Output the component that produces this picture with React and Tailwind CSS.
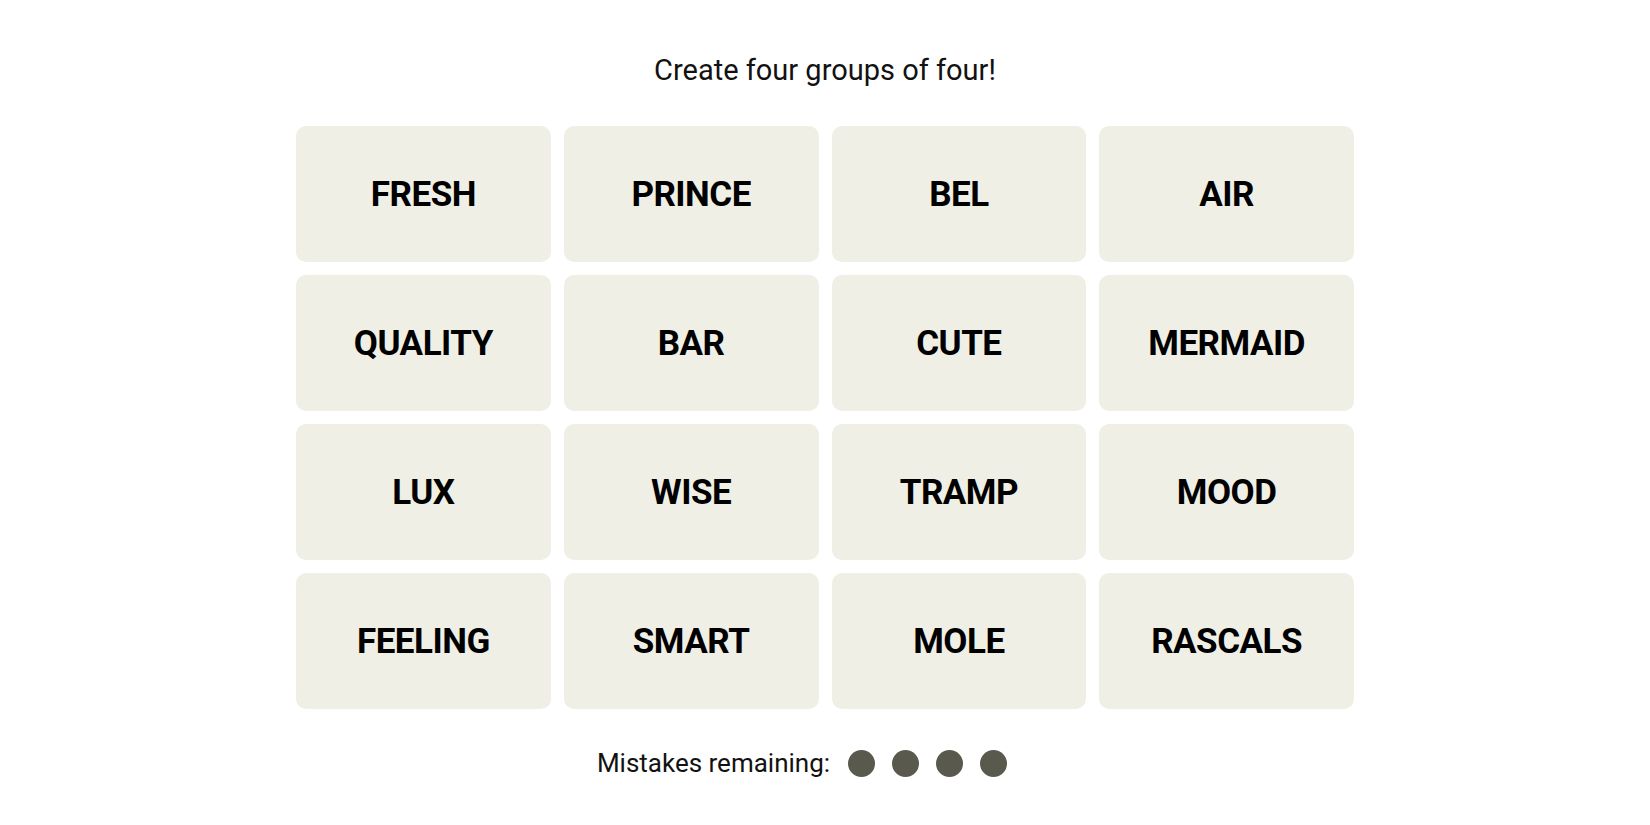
import React from "react";

const words = [
  "FRESH", "PRINCE", "BEL", "AIR",
  "QUALITY", "BAR", "CUTE", "MERMAID",
  "LUX", "WISE", "TRAMP", "MOOD",
  "FEELING", "SMART", "MOLE", "RASCALS",
];

export default function App() {
  return (
    <div className="w-full min-h-[825px] bg-white flex flex-col items-center pt-[54px] font-['Roboto',sans-serif] text-[#121212]">
      <h1 className="text-[29px] leading-[32px] font-normal">Create four groups of four!</h1>
      <div className="mt-[40px] w-[1058px] grid grid-cols-4 gap-[13px]">
        {words.map((w) => (
          <div
            key={w}
            className="h-[136px] rounded-[10px] bg-[#efefe6] flex items-center justify-center"
          >
            <span className="font-bold text-[35px] tracking-[-0.5px] leading-none text-[#000000]">
              {w}
            </span>
          </div>
        ))}
      </div>
      <div className="mt-[41px] flex items-center">
        <span className="text-[26px] leading-[27px]">Mistakes remaining:</span>
        <div className="ml-[18px] pr-[46px] flex items-center gap-[17px]">
          <span className="w-[27px] h-[27px] rounded-full bg-[#5a594e]" />
          <span className="w-[27px] h-[27px] rounded-full bg-[#5a594e]" />
          <span className="w-[27px] h-[27px] rounded-full bg-[#5a594e]" />
          <span className="w-[27px] h-[27px] rounded-full bg-[#5a594e]" />
        </div>
      </div>
    </div>
  );
}
